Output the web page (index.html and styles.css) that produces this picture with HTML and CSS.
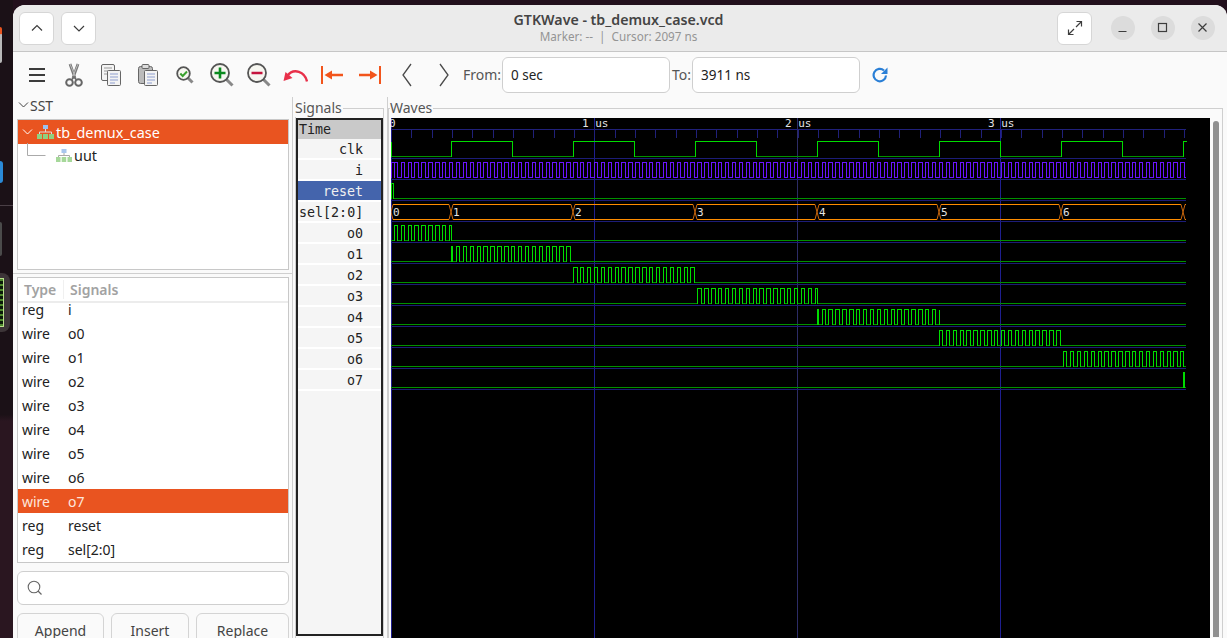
FILE: index.html
```
<!DOCTYPE html>
<html lang="en">
<head>
<meta charset="utf-8">
<title>GTKWave - tb_demux_case.vcd</title>
<link rel="stylesheet" href="styles.css">
</head>
<body>
<div class="dock">
  <div class="dock-app dock-orange"></div>
  <div class="dock-app dock-blue"></div>
  <div class="dock-line"></div>
  <div class="dock-app dock-grey"></div>
  <div class="dock-active"><div class="dock-green"></div></div>
</div>
<div class="window">
  <header class="titlebar">
    <div class="tb-left">
      <button class="hbtn"><svg width="16" height="16" viewBox="0 0 16 16"><path class="ic-line" d="M3 10.5 8 5.5l5 5"/></svg></button>
      <button class="hbtn"><svg width="16" height="16" viewBox="0 0 16 16"><path class="ic-line" d="M3 6l5 5 5-5"/></svg></button>
    </div>
    <div class="title">
      <div class="title-main">GTKWave - tb_demux_case.vcd</div>
      <div class="title-sub">Marker: -- &nbsp;|&nbsp; Cursor: 2097 ns</div>
    </div>
    <div class="tb-right">
      <button class="hbtn"><svg width="18" height="18" viewBox="0 0 18 18"><path class="ic-line" d="M10.5 2.5h5v5M15.5 2.5l-5.5 5.5M7.500 15.500h-5v-5M2.500 15.500l5.500-5.500"/></svg></button>
      <button class="wbtn wbtn-first"><svg width="12" height="12" viewBox="0 0 12 12"><path class="ic-line" d="M1.500 9.500h8"/></svg></button>
      <button class="wbtn"><svg width="12" height="12" viewBox="0 0 12 12"><rect class="ic-line" x="1.500" y="1.500" width="8" height="8"/></svg></button>
      <button class="wbtn"><svg width="12" height="12" viewBox="0 0 12 12"><path class="ic-line" d="M1.500 1.500l8 8M9.500 1.500l-8 8"/></svg></button>
    </div>
  </header>

  <div class="toolbar">
    <span class="tool"><svg width="18" height="16" viewBox="0 0 18 16"><path class="ic-menu" d="M1 2h16M1 8h16M1 14h16"/></svg></span>
    <span class="tool"><svg width="20" height="24" viewBox="0 0 20 24"><path d="M6 1l5 14M14 1L9 15" fill="none" stroke="#777" stroke-width="2.800"/><path d="M6 1l5 12M14 1L9 13" fill="none" stroke="#ccc" stroke-width=".8"/><circle cx="5.500" cy="19.500" r="3.300" fill="none" stroke="#666" stroke-width="2"/><circle cx="14.500" cy="19.500" r="3.300" fill="none" stroke="#666" stroke-width="2"/><path d="M8 16.500l1.500-2M12 16.500l-1.500-2" stroke="#666" stroke-width="1.600"/></svg></span>
    <span class="tool"><svg width="20" height="22" viewBox="0 0 20 22"><rect class="doc" x=".5" y=".5" width="13" height="16" rx="1.500"/><path d="M3 4h8M3 7h8M3 10h8" stroke="#999"/><rect class="doc" x="6.500" y="6.500" width="13" height="15" rx="1"/><path d="M9 10h8M9 13h8M9 16h8M9 19h5" stroke="#8f9fd0"/></svg></span>
    <span class="tool"><svg width="20" height="22" viewBox="0 0 20 22"><rect x=".5" y="2.500" width="14" height="17" rx="2" fill="#bbb" stroke="#666"/><rect x="4" y=".5" width="7" height="4" rx="1" fill="#ddd" stroke="#666"/><rect class="doc" x="6.500" y="6.500" width="13" height="15" rx="1"/><path d="M9 10h8M9 13h8M9 16h8M9 19h5" stroke="#8f9fd0"/></svg></span>
    <span class="tool"><svg width="18" height="18" viewBox="0 0 18 18"><path class="lens-h" d="M11.500 11.500l5 5"/><circle class="lens" cx="7.500" cy="7.500" r="6.300"/><path d="M4.300 7.500l2.400 2.500 4.300-4.500" fill="none" stroke="#3aa02e" stroke-width="2"/></svg></span>
    <span class="tool"><svg width="24" height="24" viewBox="0 0 24 24"><path class="lens-h" d="M15.500 15.500l7 7"/><circle class="lens" cx="10" cy="10" r="9"/><path d="M10 4.500v11M4.500 10h11" stroke="#0a8a1e" stroke-width="2.600"/></svg></span>
    <span class="tool"><svg width="24" height="24" viewBox="0 0 24 24"><path class="lens-h" d="M15.500 15.500l7 7"/><circle class="lens" cx="10" cy="10" r="9"/><path d="M4.500 10h11" stroke="#c4143c" stroke-width="2.600"/></svg></span>
    <span class="tool"><svg width="25" height="14" viewBox="0 0 25 14"><path d="M24 13.500C22 4 11 -1 4 8" fill="none" stroke="#e8304a" stroke-width="2.400"/><path d="M0.500 13l2-9 7 6z" fill="#e8304a"/></svg></span>
    <span class="tool"><svg width="23" height="18" viewBox="0 0 23 18"><path d="M1 0v18" stroke="#f2541b" stroke-width="2"/><path d="M10 9h12" stroke="#f2541b" stroke-width="2.400"/><path d="M3.500 9l7.500-4.500v9z" fill="#f2541b"/></svg></span>
    <span class="tool"><svg width="23" height="18" viewBox="0 0 23 18"><path d="M22 0v18" stroke="#f2541b" stroke-width="2"/><path d="M1 9h12" stroke="#f2541b" stroke-width="2.400"/><path d="M19.500 9l-7.500-4.500v9z" fill="#f2541b"/></svg></span>
    <span class="tool"><svg width="10" height="24" viewBox="0 0 10 24"><path class="ic-chev" d="M9 1L1 12l8 11"/></svg></span>
    <span class="tool"><svg width="10" height="24" viewBox="0 0 10 24"><path class="ic-chev" d="M1 1l8 11-8 11"/></svg></span>
    <span class="range-label">From:</span>
    <div class="entry range-entry">0 sec</div>
    <span class="range-label range-to">To:</span>
    <div class="entry range-entry range-entry-to">3911 ns</div>
    <span class="tool tool-refresh"><svg width="16" height="16" viewBox="0 0 16 16"><path d="M14 8.500A6.200 6.200 0 1 1 12 3.500" fill="none" stroke="#2a7fd6" stroke-width="2.200"/><path d="M15.500 .5v6.500h-6.500z" fill="#2a7fd6"/></svg></span>
  </div>

  <main class="main">
    <section class="left">
      <div class="sst-head"><svg width="11" height="8" viewBox="0 0 11 8"><path class="ic-chev-s" d="M1 1.500l4.500 4.500 4.500-4.500"/></svg><span>SST</span></div>
      <div class="frame tree">
        <div class="tree-row tree-selected">
          <svg class="chev-w" width="12" height="8" viewBox="0 0 12 8"><path d="M1 1.500l4.500 4.500 4.500-4.500" fill="none" stroke="#fff" stroke-width="1"/></svg>
          <svg class="hier" width="17" height="14" viewBox="0 0 17 14"><rect x="6" y="0" width="5" height="4" fill="#9cc0f0"/><path d="M8.500 4v3M2.500 9V7h12v2" stroke="#ddd" fill="none"/><rect x="0" y="9" width="5" height="5" fill="#8fd080"/><rect x="6" y="9" width="5" height="5" fill="#8fd080"/><rect x="12" y="9" width="5" height="5" fill="#8fd080"/></svg>
          <span>tb_demux_case</span>
        </div>
        <div class="tree-row tree-child">
          <svg class="tree-conn" width="19" height="13" viewBox="0 0 19 13"><path d="M.5 0v12.500h18" fill="none" stroke="#aaa"/></svg>
          <svg class="hier hier-child" width="16" height="13" viewBox="0 0 16 13"><rect x="5.500" y="0" width="5" height="4" fill="#a8c6ee"/><path d="M8 4v3M2.500 9V6.500h11V9" stroke="#aaa" fill="none"/><rect x="0" y="8" width="4.500" height="5" fill="#a6d89a"/><rect x="5.700" y="8" width="4.500" height="5" fill="#a6d89a"/><rect x="11.500" y="8" width="4.500" height="5" fill="#a6d89a"/></svg>
          <span>uut</span>
        </div>
      </div>
      <div class="pane-line"></div>
      <div class="frame siglist">
        <div class="sig-head"><span class="col-type head-type">Type</span><span class="col-name">Signals</span></div>
        <div class="sig-row sig-first"><span class="col-type">reg</span><span class="col-name">i</span></div>
        <div class="sig-row"><span class="col-type">wire</span><span class="col-name">o0</span></div>
        <div class="sig-row"><span class="col-type">wire</span><span class="col-name">o1</span></div>
        <div class="sig-row"><span class="col-type">wire</span><span class="col-name">o2</span></div>
        <div class="sig-row"><span class="col-type">wire</span><span class="col-name">o3</span></div>
        <div class="sig-row"><span class="col-type">wire</span><span class="col-name">o4</span></div>
        <div class="sig-row"><span class="col-type">wire</span><span class="col-name">o5</span></div>
        <div class="sig-row"><span class="col-type">wire</span><span class="col-name">o6</span></div>
        <div class="sig-row sig-selected"><span class="col-type">wire</span><span class="col-name">o7</span></div>
        <div class="sig-row"><span class="col-type">reg</span><span class="col-name">reset</span></div>
        <div class="sig-row"><span class="col-type">reg</span><span class="col-name">sel[2:0]</span></div>
      </div>
      <div class="entry search"><svg width="16" height="16" viewBox="0 0 16 16"><circle cx="7" cy="7" r="5.800" fill="none" stroke="#666" stroke-width="1.100"/><path d="M11 11l3.500 3.500" stroke="#666" stroke-width="1.300"/></svg></div>
      <div class="actions">
        <button class="action act-append">Append</button>
        <button class="action act-insert">Insert</button>
        <button class="action act-replace">Replace</button>
      </div>
    </section>

    <fieldset class="group group-signals">
      <legend>Signals</legend>
      <div class="names">
        <div class="name name-time">Time</div>
        <div class="name">clk</div>
        <div class="name">i</div>
        <div class="name name-active">reset</div>
        <div class="name name-left">sel[2:0]</div>
        <div class="name">o0</div>
        <div class="name">o1</div>
        <div class="name">o2</div>
        <div class="name">o3</div>
        <div class="name">o4</div>
        <div class="name">o5</div>
        <div class="name">o6</div>
        <div class="name">o7</div>
      </div>
    </fieldset>
    <div class="vsep"></div>

    <fieldset class="group group-waves">
      <legend>Waves</legend>
      <div class="waves-body">
        <svg id="waves" class="wave-canvas" width="819" height="520" viewBox="391 118 819 520"></svg>
        <div class="scrollbar"></div>
      </div>
    </fieldset>
  </main>
</div>
<script src="app.js"></script>
</body>
</html>
```
FILE: styles.css
```
* { box-sizing: border-box; }
html, body { margin: 0; height: 100%; }
body {
  width: 1227px; height: 638px; overflow: hidden; display: flex;
  background: #22101c;
  font-family: "Noto Sans", "Liberation Sans", sans-serif;
  font-size: 14px; color: #2c2c2c;
}
button { font: inherit; color: inherit; padding: 0; cursor: default; }
.dock { width: 13px; flex: none; background: linear-gradient(#1b1117 0, #1b1117 65%, #2a1620 66%, #2a1620 100%); display: flex; flex-direction: column; overflow: hidden; }
.dock-app { flex: none; }
.dock-orange { width: 2px; height: 36px; margin-top: 27px; background: linear-gradient(#e95420 0, #e95420 20%, #b9b9b9 21%, #b9b9b9 100%); border-radius: 0 3px 3px 0; }
.dock-blue { width: 3px; height: 22px; margin-top: 98px; background: #2a8ad8; border-radius: 0 10px 10px 0; }
.dock-line { height: 1px; margin-top: 22px; background: #4a3f46; }
.dock-grey { width: 2px; height: 34px; margin-top: 16px; background: #4b4b4b; border-radius: 0 3px 3px 0; }
.dock-active { width: 10px; height: 59px; margin-top: 17px; background: #3d3538; border-radius: 0 8px 8px 0; padding-top: 5px; }
.dock-green { width: 4px; height: 49px; background: #0a1a08; border: 1.500px solid #b9de8c; border-left: 0; background-image: repeating-linear-gradient(#4e8a2c 0 2px, #0a1a08 2px 5px); }

.window { flex: 1; min-width: 0; margin-top: 5px; height: 633px; background: #fafafa; border-radius: 12px 12px 0 0; display: flex; flex-direction: column; overflow: hidden; }
.titlebar { flex: none; height: 47px; background: #ebebeb; border-bottom: 1px solid #c6c6c6; display: grid; grid-template-columns: 1fr auto 1fr; align-items: center; }
.tb-left { display: flex; gap: 7px; padding-left: 6px; }
.tb-right { display: flex; align-items: center; justify-content: flex-end; padding-right: 12px; }
.hbtn { width: 35px; height: 33px; background: #fff; border: 1px solid #d6d6d6; border-radius: 6px; display: flex; align-items: center; justify-content: center; }
.wbtn { width: 24px; height: 24px; margin-left: 16px; border: 0; border-radius: 50%; background: #dcdcdc; display: flex; align-items: center; justify-content: center; }
.wbtn-first { margin-left: 19px; }
.ic-line { fill: none; stroke: #3d3d3d; stroke-width: 1.200; }
.title { text-align: center; padding-right: 3px; }
.title-main { font-size: 14.200px; font-weight: 600; color: #444; line-height: 18px; }
.title-sub { font-size: 11.700px; color: #949494; line-height: 14px; padding-bottom: 2px; }

.toolbar { flex: none; height: 45px; display: flex; align-items: center; padding-left: 5px; }
.tool { flex: none; width: 37px; height: 30px; display: flex; align-items: center; justify-content: center; }
.ic-menu { fill: none; stroke: #3c3c3c; stroke-width: 1.800; }
.ic-chev { fill: none; stroke: #4a4a4a; stroke-width: 1.300; }
.doc { fill: #f3f3f3; stroke: #666; }
.lens { fill: #f6f6f0; stroke: #555; stroke-width: 1.800; }
.lens-h { fill: none; stroke: #888; stroke-width: 3; }
.range-label { flex: none; color: #555; margin-left: 1px; width: 39px; }
.range-to { width: 20px; margin-left: 2px; }
.entry { background: #fff; border: 1px solid #cfcfcf; border-radius: 6px; }
.range-entry { flex: none; width: 168px; height: 36px; line-height: 34px; padding-left: 8px; color: #222; font-size: 13.500px; }
.tool-refresh { margin-left: 1px; }

.main { flex: 1; min-height: 0; display: flex; }
.left { flex: none; width: 280px; padding: 0 3px 0 4px; border-right: 1px solid #cfcfcf; }
.ic-chev-s { fill: none; stroke: #444; stroke-width: 1; }
.sst-head { height: 22px; display: flex; align-items: center; gap: 1px; padding-bottom: 6px; color: #444; padding-left: 1px; }
.frame { background: #fff; border: 1px solid #c8c8c8; }
.tree { height: 151px; }
.tree-row { height: 24px; display: flex; align-items: center; font-size: 14.400px; }
.tree-selected { background: #e95420; color: #fff; padding-left: 4px; }
.chev-w { margin-right: 3px; }
.hier { margin-right: 2px; }
.tree-child { padding-left: 9px; padding-bottom: 2px; color: #222; }
.tree-conn { margin-top: -12px; margin-right: 10px; }
.pane-line { height: 1px; margin: 3px -3px 3px -4px; background: #cfcfcf; }
.siglist { height: 286px; overflow: hidden; }
.sig-head { height: 25px; display: flex; align-items: center; border-bottom: 2px solid #ececec; color: #a2a2a2; font-weight: 600; }
.col-type { width: 46px; flex: none; padding-left: 4px; }
.head-type { padding-left: 6px; width: 46px; border-right: 1px solid #f0f0f0; }
.col-name { flex: none; padding-left: 4px; }
.sig-head .col-name { padding-left: 6px; }
.sig-row { height: 24px; display: flex; align-items: center; color: #222; }
.sig-first { height: 18px; padding-bottom: 6px; }
.sig-selected { background: #e95420; color: #fde6dc; }
.search { height: 34px; margin-top: 8px; display: flex; align-items: center; padding-left: 9px; background: #fff; }
.actions { display: flex; gap: 7px; margin-top: 8px; }
.action { height: 40px; background: #fafafa; border: 1px solid #d4d4d4; border-radius: 6px 6px 0 0; color: #444; padding-bottom: 6px; }
.act-append { width: 87px; }
.act-insert { width: 78px; }
.act-replace { width: 93px; }

.vsep { flex: none; width: 1px; background: #cfcfcf; }
.group { margin: 0; padding: 0; min-width: 0; border: 1px solid #cfcfcf; border-bottom: 0; height: 560px; }
.group legend { padding: 0 1px 0 0; color: #555; font-size: 14px; line-height: 15px; height: 17px; }
.group-signals { flex: none; width: 89px; margin: 3px 3px 0 2px; }
.group-signals legend { margin-left: -1px; }
.group-waves legend { margin-left: 1px; }
.names { width: 87px; margin-top: 1px; height: 518px; background: #f5f5f5; border: 2px solid #222; font-family: "DejaVu Sans Mono", monospace; font-size: 13.330px; color: #222; }
.name { height: 21px; line-height: 21px; text-align: right; padding-right: 18px; border-bottom: 2px solid #fff; }
.name-time { height: 18.500px; line-height: 20px; background: #c9c9c9; text-align: left; padding-left: 1px; border: 0; }
.name-active { background: #4464ac; color: #f0f0f0; }
.name-left { text-align: left; padding-left: 1px; padding-right: 0; }
.group-waves { flex: 1; margin: 3px 4px 0 0; }
.waves-body { display: flex; margin-top: 1px; margin-left: 2px; }
.wave-canvas { display: block; flex: none; background: #000; }
.scrollbar { flex: none; width: 6px; height: 516px; margin: 3px 0 0 3px; background: #909090; border-radius: 3px 3px 0 0; }

.w-sep { stroke: #1c1c78; stroke-width: 1; fill: none; shape-rendering: crispEdges; }
.w-guide { stroke: #1f1f90; stroke-width: 1; shape-rendering: crispEdges; }
.w-guide-dim { stroke: #2c2c66; stroke-width: 1; shape-rendering: crispEdges; }
.w-tick { stroke: #20207a; stroke-width: 1; fill: none; shape-rendering: crispEdges; }
.w-hi { stroke: #00dc00; stroke-width: 1; fill: none; shape-rendering: crispEdges; }
.w-lo { stroke: #009000; stroke-width: 1; fill: none; shape-rendering: crispEdges; }
.w-x { stroke: #6a14ff; stroke-width: 1; fill: none; shape-rendering: crispEdges; }
.w-bus { stroke: #ff8c00; stroke-width: 1; fill: none; shape-rendering: crispEdges; }
.w-cross { stroke: #c8660c; stroke-width: 1; fill: none; }
.w-text { fill: #e4e4e4; font-family: "DejaVu Sans Mono", monospace; font-size: 11px; }
```
FILE: app.js
```
(function () {
  var svg = document.getElementById('waves');
  var NS = 'http://www.w3.org/2000/svg';
  var X0 = 391, XEND = 1186, P = 6.9, ANCHOR = 580;
  var STEP = [451, 573, 695, 817, 939, 1061, 1183];

  function add(tag, cls, attrs, text) {
    var el = document.createElementNS(NS, tag);
    el.setAttribute('class', cls);
    for (var k in attrs) el.setAttribute(k, attrs[k]);
    if (text !== undefined) el.textContent = text;
    svg.appendChild(el);
  }
  function path(cls, d) { add('path', cls, { d: d }); }
  function px(x) { return Math.round(x) + 0.5; }
  function rowHigh(n) { return 141.5 + 21 * n; }
  function rowLow(n) { return 156.5 + 21 * n; }

  // time guides
  add('line', 'w-guide', { x1: 391.5, y1: 118, x2: 391.5, y2: 638 });
  add('line', 'w-guide', { x1: 594.5, y1: 118, x2: 594.5, y2: 638 });
  add('line', 'w-guide-dim', { x1: 797.5, y1: 118, x2: 797.5, y2: 638 });
  add('line', 'w-guide', { x1: 1000.5, y1: 118, x2: 1000.5, y2: 638 });

  // ruler
  var d = 'M391 129.5H' + XEND;
  for (var t = 1; t * 20.33 < XEND - X0; t++) d += 'M' + px(X0 + t * 20.33) + ' 130V138';
  path('w-tick', d);
  add('text', 'w-text', { x: 389, y: 127 }, '0');
  add('text', 'w-text', { x: 582, y: 127 }, '1 us');
  add('text', 'w-text', { x: 785, y: 127 }, '2 us');
  add('text', 'w-text', { x: 988, y: 127 }, '3 us');

  // row separators
  d = '';
  for (var r = 0; r < 12; r++) d += 'M391 ' + (158.5 + 21 * r) + 'H' + XEND;
  path('w-sep', d);

  // level trace from a list of high intervals [[a,b],...]; a high level that
  // reaches the end of the dump runs off without a falling edge
  function trace(n, highs, hiClass) {
    var hy = rowHigh(n), ly = rowLow(n), hi = '', lo = '', cur = X0;
    highs.forEach(function (h) {
      var a = px(h[0]), b = px(h[1]);
      if (a > cur) lo += 'M' + cur + ' ' + ly + 'H' + a;
      hi += 'M' + a + ' ' + ly + 'V' + hy + 'H' + b;
      if (h[1] < XEND) hi += 'V' + ly;
      cur = b;
    });
    if (cur < XEND) lo += 'M' + cur + ' ' + ly + 'H' + XEND;
    path(hiClass || 'w-lo', lo);
    path(hiClass || 'w-hi', hi);
  }

  // data input: square wave, clipped to [from, to]
  function pulses(from, to) {
    var out = [], k = Math.floor((from - ANCHOR) / P) - 1;
    for (; ; k++) {
      var a = ANCHOR + k * P, b = a + P / 2;
      if (a >= to) break;
      if (b <= from) continue;
      out.push([Math.max(a, from), Math.min(b, to)]);
    }
    return out;
  }

  // clk
  var clk = [];
  for (var i = 0; i < STEP.length; i++) clk.push([STEP[i], i < 6 ? STEP[i] + 61 : XEND]);
  trace(0, clk);
  path('w-hi', 'M391.5 141.5V156.5');

  // i
  trace(1, [[X0, X0 + 3]].concat(pulses(X0 + 3, XEND)), 'w-x');

  // reset
  trace(2, [[X0, 393]]);

  // sel bus
  var top = 204.5, bot = 219.5, bx = [391].concat(STEP);
  d = ''; var cr = '';
  for (i = 0; i < bx.length; i++) {
    var s = bx[i] + 2, e = i + 1 < bx.length ? bx[i + 1] - 2 : XEND;
    d += 'M' + s + ' ' + top + 'H' + e + 'M' + s + ' ' + bot + 'H' + e;
    if (i > 0) cr += 'M' + (bx[i] - 2) + ' ' + top + 'L' + s + ' ' + bot + 'M' + (bx[i] - 2) + ' ' + bot + 'L' + s + ' ' + top;
  }
  cr += 'M391 212L393 ' + top + 'M391 212L393 ' + bot;
  path('w-bus', d);
  path('w-cross', cr);
  for (i = 0; i < 7; i++) add('text', 'w-text', { x: (i ? bx[i] : 391) + 2, y: 216 }, String(i));

  // o0..o7
  var ranges = [[391, 451], [451, 573], [573, 695], [695, 817], [817, 939], [939, 1061], [1061, 1183], [1183, XEND]];
  ranges.forEach(function (rg, idx) { trace(4 + idx, pulses(rg[0], rg[1])); });
})();
```
